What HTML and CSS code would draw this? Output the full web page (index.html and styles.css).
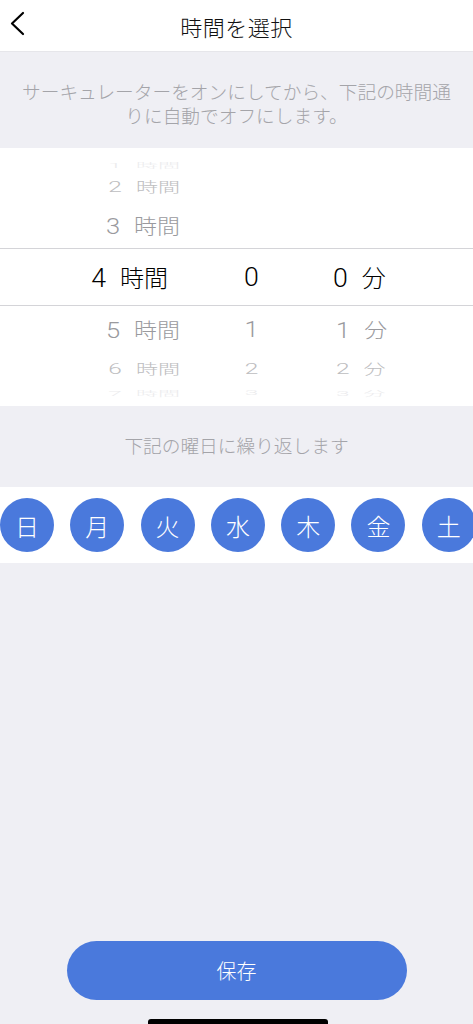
FILE: index.html
```html
<!DOCTYPE html>
<html lang="ja">
  <head>
    <meta charset="utf-8" />
    <meta name="viewport" content="width=device-width, initial-scale=1.0" />
    <title>時間を選択</title>
    <link rel="stylesheet" href="styles.css">
  </head>
  <body>
    <div class="screen">
      <div class="header">
        <span class="back">
          <svg width="16" height="26" viewBox="0 0 16 26"><polyline points="13,2 2,12.5 13,23" fill="none" stroke="#000" stroke-width="2.2" stroke-linecap="round" stroke-linejoin="round"/></svg>
        </span>
        <span class="title">時間を選択</span>
      </div>

      <p class="info">サーキュレーターをオンにしてから、下記の時間通<br>りに自動でオフにします。</p>

      <div class="picker">
        <div class="row far3">
          <div class="h">1<span class="unit">時間</span></div><div class="m"></div><div class="s"></div>
        </div>
        <div class="row far2">
          <div class="h">2<span class="unit">時間</span></div><div class="m"></div><div class="s"></div>
        </div>
        <div class="row far1">
          <div class="h">3<span class="unit">時間</span></div><div class="m"></div><div class="s"></div>
        </div>
        <div class="row selected">
          <div class="h">4<span class="unit">時間</span></div><div class="m">0</div><div class="s">0<span class="unit">分</span></div>
        </div>
        <div class="row far1 below">
          <div class="h">5<span class="unit">時間</span></div><div class="m">1</div><div class="s">1<span class="unit">分</span></div>
        </div>
        <div class="row far2 below">
          <div class="h">6<span class="unit">時間</span></div><div class="m">2</div><div class="s">2<span class="unit">分</span></div>
        </div>
        <div class="row far3 below">
          <div class="h">7<span class="unit">時間</span></div><div class="m">3</div><div class="s">3<span class="unit">分</span></div>
        </div>
      </div>

      <p class="repeat">下記の曜日に繰り返します</p>

      <div class="days">
        <span class="day">日</span>
        <span class="day">月</span>
        <span class="day">火</span>
        <span class="day">水</span>
        <span class="day">木</span>
        <span class="day">金</span>
        <span class="day">土</span>
      </div>

      <div class="filler"></div>

      <div class="footer">
        <button class="save">保存</button>
        <div class="home-bar"></div>
      </div>
    </div>
  </body>
</html>
```

FILE: styles.css
```css
body {
    margin: 0;
    background: #efeff4;
    font-family: "Liberation Sans", "Noto Sans CJK JP", sans-serif;
}

.screen {
    width: 473px;
    height: 1024px;
    overflow: hidden;
    display: flex;
    flex-direction: column;
}

.header {
    height: 52px;
    background: #fff;
    border-bottom: 1px solid #e6e6ea;
    box-sizing: border-box;
    display: flex;
    align-items: center;
    justify-content: center;
    position: relative;
}

.back {
    position: absolute;
    left: 10px;
    top: 11px;
}

.title {
    font-size: 22px;
    font-weight: 300;
    color: #111;
    letter-spacing: 0.5px;
}

.info {
    margin: 0;
    height: 96px;
    box-sizing: border-box;
    padding: 29px 6px 0;
    font-size: 18.7px;
    line-height: 24px;
    font-weight: 300;
    color: #a4a4a9;
    text-align: center;
}

.picker {
    height: 258px;
    background: #fff;
    box-sizing: border-box;
    padding-top: 9px;
    overflow: hidden;
    font-family: "Roboto", "Noto Sans CJK JP", sans-serif;
}

.row {
    display: flex;
    align-items: center;
    font-weight: 300;
}

.row > div {
    line-height: 30px;
}

.row .h {
    width: 180px;
    text-align: right;
    box-sizing: border-box;
}

.row .m {
    width: 143px;
    text-align: center;
}

.row .s {
    padding-left: 13px;
}

.unit {
    margin-left: 14px;
    font-size: 0.9em;
    font-family: "Noto Sans CJK JP", sans-serif;
}

.far3 {
    height: 16px;
    font-size: 24.5px;
    color: #ebebed;
    transform: scaleY(0.3);
}

.far2 {
    height: 26px;
    font-size: 24.5px;
    color: #bdbdc0;
    transform: scaleY(0.62);
}

.far1 {
    height: 49px;
    font-size: 25.5px;
    color: #9a9a9e;
    transform: scaleY(0.88);
    padding-top: 4px;
    box-sizing: border-box;
}

.far1.below {
    height: 46px;
    padding-top: 0;
}

.far2.below {
    height: 33px;
}

.selected {
    height: 58px;
    font-size: 26.7px;
    color: #000;
    border-top: 1px solid #d4d4d8;
    border-bottom: 1px solid #d4d4d8;
    box-sizing: border-box;
}

.selected .h {
    padding-right: 12px;
}

.selected .s {
    padding-left: 10px;
}

.repeat {
    margin: 0;
    height: 81px;
    line-height: 81px;
    font-size: 18.7px;
    font-weight: 300;
    color: #a4a4a9;
    text-align: center;
}

.days {
    height: 76px;
    background: #fff;
    display: flex;
    align-items: center;
    gap: 16.3px;
}

.day {
    flex: none;
    width: 54px;
    height: 54px;
    border-radius: 50%;
    background: #4a79dc;
    color: #fff;
    font-size: 24px;
    font-weight: 300;
    display: flex;
    align-items: center;
    justify-content: center;
}

.filler {
    flex: 1;
}

.footer {
    display: flex;
    flex-direction: column;
    align-items: center;
}

.save {
    width: 340px;
    height: 59px;
    border: none;
    border-radius: 30px;
    background: #4a79dc;
    color: #fff;
    font-family: "Liberation Sans", "Noto Sans CJK JP", sans-serif;
    font-size: 20px;
    font-weight: 300;
    padding: 0;
}

.home-bar {
    margin-top: 19px;
    width: 180px;
    height: 5px;
    border-radius: 3px 3px 0 0;
    background: #000;
    margin-left: 3px;
}
```
